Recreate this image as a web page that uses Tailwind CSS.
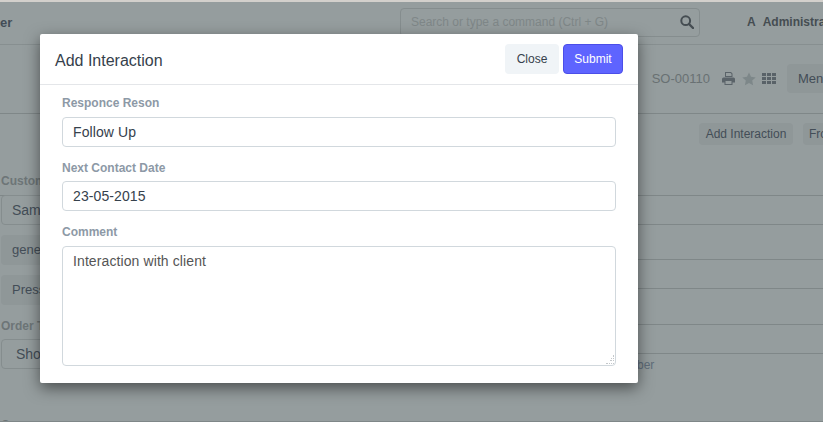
<!DOCTYPE html>
<html lang="en">
<head>
  <meta charset="UTF-8">
  <title>Add Interaction</title>
  <script src="https://cdn.jsdelivr.net/npm/@tailwindcss/browser@4"></script>
</head>
<body class="relative h-[422px] w-[823px] overflow-hidden border-b border-[#7f8788] bg-[#959d9e] font-['Liberation_Sans',sans-serif] text-[#434d57]">
  <!-- page behind the backdrop -->
  <div class="h-[2px] bg-[#d3d0cc]"></div>

  <header class="flex h-[43px] items-center border-b border-[#878f90] pb-[2px]">
    <span class="w-[400px] shrink-0 text-[13px] font-bold leading-none">er</span>
    <div class="flex h-[29px] w-[300px] shrink-0 items-center justify-between rounded-[4px] border border-[#858d8e] pl-[10px] pr-[5px]">
      <span class="text-xs text-[#7f8788]">Search or type a command (Ctrl + G)</span>
      <svg class="h-[14px] w-[14px]" viewBox="0 0 14 14" fill="none" stroke="#454d52" stroke-width="2"><circle cx="5.700" cy="5.700" r="4.400"/><path d="M9 9l4 4" stroke-width="2.400" stroke-linecap="round"/></svg>
    </div>
    <span class="ml-[47px] whitespace-nowrap text-xs font-bold text-[#454d52]">A<span class="ml-[7px]">Administra</span></span>
  </header>

  <div class="flex h-[69px] items-center justify-end border-b border-[#7f8788] pb-[1px]">
    <span class="text-[13px] text-[#697173]">SO-00110</span>
    <svg class="ml-[12px] h-[13px] w-[13px]" viewBox="0 0 13 13" fill="#5a6369"><path d="M3 0h6l1.500 1.500V5H3zM4 1v3h5.500V2L8.500 1zM1.500 5.500h10A1.500 1.500 0 0 1 13 7v3.500h-2.500V13h-8v-2.500H0V7a1.500 1.500 0 0 1 1.500-1.500zM3.500 9v3h6V9z" fill-rule="evenodd"/></svg>
    <svg class="ml-[7px] h-[14px] w-[14px]" viewBox="0 0 14 14" fill="#7d8789"><path d="M7 .5l2 4.300 4.700.6-3.500 3.200.9 4.700L7 11l-4.100 2.300.9-4.700L.3 5.400 5 4.800z"/></svg>
    <svg class="ml-[6px] h-[11px] w-[14px]" viewBox="0 0 14 11" fill="#596268"><path d="M0 0h4v3H0zM5 0h4v3H5zM10 0h4v3h-4zM0 4h4v3H0zM5 4h4v3H5zM10 4h4v3h-4zM0 8h4v3H0zM5 8h4v3H5zM10 8h4v3h-4z"/></svg>
    <button class="ml-[11px] h-[29px] w-[36px] shrink-0 rounded-l-[4px] bg-[#8f9798] pl-[11px] text-left text-[13px]">Men</button>
  </div>

  <div class="flex h-[82px] justify-end gap-[10px] border-b border-[#7f8788] pt-[9px]">
    <button class="h-[22px] w-[94px] rounded-[4px] bg-[#8f9798] text-xs">Add Interaction</button>
    <button class="h-[22px] w-[20px] whitespace-nowrap rounded-l-[4px] bg-[#8f9798] pl-[6px] text-left text-xs">Fro</button>
  </div>

  <div class="flex">
    <!-- left column -->
    <div class="w-[458px] shrink-0 pl-[1px]">
      <p class="mt-[-23px] h-[22px] text-xs font-bold text-[#6d7577]">Customer</p>
      <div class="h-[30px] w-[200px] rounded-[4px] border border-[#858d8e] pl-[10px] text-sm leading-[28px]">Sam</div>
      <div class="mt-[10px] h-[30px] w-[200px] rounded-[4px] bg-[#8f9798] pl-[11px] text-[13px] leading-[30px]">general</div>
      <div class="mt-[10px] h-[30px] w-[200px] rounded-[4px] bg-[#8f9798] pl-[11px] text-[13px] leading-[30px]">Press</div>
      <p class="mt-[14px] h-[20px] text-xs font-bold leading-[14px] text-[#6d7577]">Order Type</p>
      <div class="h-[30px] w-[200px] rounded-[4px] border border-[#858d8e] pl-[14px] text-sm leading-[28px]">Shopping</div>
      <p class="mt-[49px] text-xs font-bold leading-[14px] text-[#6d7577]">Currency</p>
    </div>
    <!-- right column -->
    <div class="min-w-0 flex-1">
      <div class="h-[29px] border-b border-[#7f8788]"></div>
      <div class="h-[35px] border-b border-[#7f8788]"></div>
      <div class="h-[29px] border-b border-[#7f8788]"></div>
      <div class="h-[36px] border-b border-[#7f8788]"></div>
      <div class="h-[29px] border-b border-[#7f8788]"></div>
      <p class="pl-[133px] pt-[3px] text-xs text-[#5f6d7a]">PO Number</p>
      <p class="mt-[47px] text-xs font-bold leading-[14px] text-[#6d7577]">Price List</p>
    </div>
  </div>

  <!-- modal -->
  <div class="absolute top-[34px] left-[40px] flex h-[349px] w-[598px] flex-col rounded-[2px] bg-white shadow-[0_5px_15px_rgba(0,0,0,0.5)]">
    <div class="flex h-[51px] shrink-0 items-start justify-between border-b border-[#e4e6e9] pt-[10px] pr-[15px] pl-[15px]">
      <h4 class="mt-[1px] text-base leading-[32px] text-[#36414c]">Add Interaction</h4>
      <div class="flex gap-[4px]">
        <button class="h-[30px] w-[54px] rounded-[4px] bg-[#f0f4f7] text-xs text-[#36414c]">Close</button>
        <button class="h-[30px] w-[60px] rounded-[4px] border border-[#4b4ee8] bg-[#5e64ff] text-xs text-white">Submit</button>
      </div>
    </div>
    <form class="px-[22px]">
      <label class="mt-[11px] block h-[21px] text-xs leading-[14px] font-bold text-[#8d99a6]">Responce Reson</label>
      <input class="block h-[30px] w-full rounded-[4px] border border-[#d1d8dd] px-[10px] text-sm tracking-[0.1px] text-[#36414c] outline-none" value="Follow Up">
      <label class="mt-[14px] block h-[20px] text-xs leading-[14px] font-bold text-[#8d99a6]">Next Contact Date</label>
      <input class="block h-[30px] w-full rounded-[4px] border border-[#d1d8dd] px-[10px] text-sm tracking-[0.1px] text-[#36414c] outline-none" value="23-05-2015">
      <label class="mt-[14px] block h-[21px] text-xs leading-[14px] font-bold text-[#8d99a6]">Comment</label>
      <div class="relative h-[120px]">
        <textarea class="block h-full w-full resize-none rounded-[4px] border border-[#d1d8dd] px-[10px] py-[4px] text-sm leading-[20px] tracking-[0.1px] text-[#555] outline-none">Interaction with client</textarea>
        <svg class="absolute right-[1px] bottom-[1px] h-[10px] w-[10px]" viewBox="0 0 10 10" fill="#c4c8cb"><path d="M8 0h1v2H8zM6 3h1v1H6zM8 3h1v1H8zM5 5h1v1H5zM6 5h1v1H6zM8 5h1v1H8zM1 8h2v1H1zM4 8h1v1H4zM6 8h1v1H6zM8 8h1v1H8z"/></svg>
      </div>
    </form>
  </div>
</body>
</html>
